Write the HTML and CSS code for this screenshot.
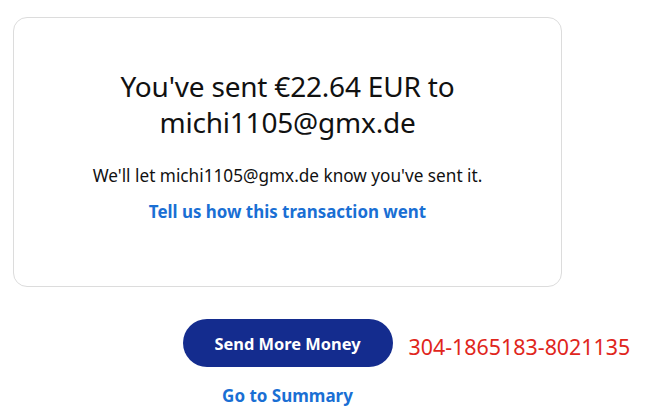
FILE: index.html
```html
<!DOCTYPE html>
<html>
<head>
<meta charset="utf-8">
<link rel="stylesheet" href="styles.css">
</head>
<body>
<div class="page">
  <div class="card">
    <h1 class="title">You've sent €22.64 EUR to<br>michi1105@gmx.de</h1>
    <p class="note">We'll let michi1105@gmx.de know you've sent it.</p>
    <a class="feedback">Tell us how this transaction went</a>
  </div>
  <div class="actions">
    <div class="btn-wrap">
      <button class="btn">Send More Money</button>
      <span class="ref">304-1865183-8021135</span>
    </div>
    <a class="summary">Go to Summary</a>
  </div>
</div>
</body>
</html>
```
FILE: styles.css
```css
html, body { margin: 0; padding: 0; background: #fff; }
body { font-family: "Noto Sans", "Open Sans", sans-serif; color: #111; }
.page { width: 549px; padding: 17px 0 0 13px; }
.card {
  box-sizing: border-box;
  height: 270px;
  border: 1px solid #dcdcdc;
  border-radius: 14px;
  display: flex;
  flex-direction: column;
  align-items: center;
  padding-top: 50px;
}
.title {
  margin: 0;
  font-size: 28px;
  font-weight: 400;
  line-height: 36px;
  text-align: center;
  letter-spacing: -0.2px;
}
.note {
  margin: 25px 0 0;
  font-size: 17.2px;
  line-height: 22px;
}
.feedback {
  margin-top: 14px;
  font-size: 16.9px;
  font-weight: 700;
  line-height: 22px;
  color: #1a6fd4;
}
.actions {
  display: flex;
  flex-direction: column;
  align-items: center;
  padding-top: 32px;
}
.btn-wrap { position: relative; }
.btn {
  width: 210px;
  height: 48px;
  border: none;
  border-radius: 24px;
  background: #142c8e;
  color: #fff;
  font-family: inherit;
  font-size: 16.4px;
  font-weight: 700;
}
.ref {
  position: absolute;
  left: 226px;
  top: 14px;
  white-space: nowrap;
  font-size: 21.4px;
  color: #e0261c;
  line-height: 28px;
}
.summary {
  margin-top: 17px;
  font-size: 17px;
  font-weight: 700;
  color: #1a6fd4;
  line-height: 24px;
}
```
